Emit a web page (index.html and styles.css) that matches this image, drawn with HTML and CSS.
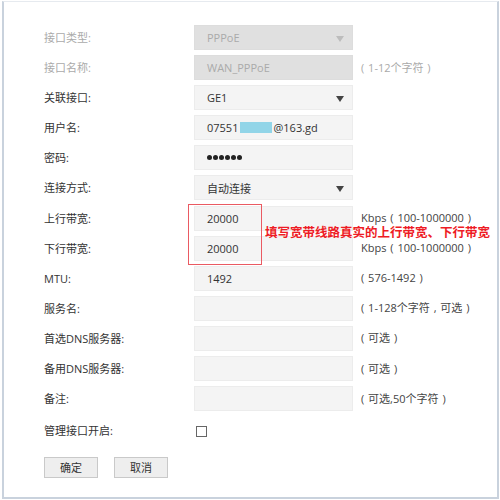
FILE: index.html
```html
<!DOCTYPE html>
<html>
<head>
<meta charset="utf-8">
<link rel="stylesheet" href="styles.css">
</head>
<body>
<div class="frame">
  <div class="form">
    <div class="row disabled">
      <div class="label">接口类型:</div>
      <div class="field select"><span>PPPoE</span><i class="arrow"></i></div>
    </div>
    <div class="row disabled">
      <div class="label">接口名称:</div>
      <div class="field"><span>WAN_PPPoE</span></div>
      <div class="hint">( 1-12个字符 )</div>
    </div>
    <div class="row">
      <div class="label">关联接口:</div>
      <div class="field select"><span>GE1</span><i class="arrow"></i></div>
    </div>
    <div class="row">
      <div class="label">用户名:</div>
      <div class="field"><span>07551</span><span class="mask"></span><span>@163.gd</span></div>
    </div>
    <div class="row">
      <div class="label">密码:</div>
      <div class="field"><span class="dots"><b></b><b></b><b></b><b></b><b></b><b></b></span></div>
    </div>
    <div class="row">
      <div class="label">连接方式:</div>
      <div class="field select"><span>自动连接</span><i class="arrow"></i></div>
    </div>
    <div class="row">
      <div class="label">上行带宽:</div>
      <div class="field"><span>20000</span></div>
      <div class="hint">Kbps ( 100-1000000 )</div>
    </div>
    <div class="row">
      <div class="label">下行带宽:</div>
      <div class="field"><span>20000</span></div>
      <div class="hint">Kbps ( 100-1000000 )</div>
    </div>
    <div class="row">
      <div class="label">MTU:</div>
      <div class="field"><span>1492</span></div>
      <div class="hint">( 576-1492 )</div>
    </div>
    <div class="row">
      <div class="label">服务名:</div>
      <div class="field"></div>
      <div class="hint">( 1-128个字符 , 可选 )</div>
    </div>
    <div class="row">
      <div class="label">首选DNS服务器:</div>
      <div class="field"></div>
      <div class="hint">( 可选 )</div>
    </div>
    <div class="row">
      <div class="label">备用DNS服务器:</div>
      <div class="field"></div>
      <div class="hint">( 可选 )</div>
    </div>
    <div class="row">
      <div class="label">备注:</div>
      <div class="field"></div>
      <div class="hint">( 可选,50个字符 )</div>
    </div>
    <div class="row check-row">
      <div class="label">管理接口开启:</div>
      <div class="checkbox"></div>
    </div>
    <div class="buttons">
      <div class="btn">确定</div>
      <div class="btn">取消</div>
    </div>
  </div>
  <div class="note-box"></div>
  <div class="note-text">填写宽带线路真实的上行带宽、下行带宽</div>
</div>
</body>
</html>
```
FILE: styles.css
```css
html, body {
  margin: 0;
  padding: 0;
  background: #ffffff;
}
body {
  font-family: "Open Sans", "Noto Sans CJK SC", sans-serif;
  font-size: 11px;
  color: #333333;
}
.frame {
  position: relative;
  margin: 1px 0 0 2px;
  width: 493px;
  height: 495px;
  border: 2px solid #c9d2dd;
  border-top: 1px solid #e6eaef;
}
.form {
  padding: 23px 0 0 40px;
}
.row {
  display: flex;
  align-items: flex-start;
  height: 30.1px;
}
.label {
  width: 150px;
  height: 25px;
  line-height: 25px;
  white-space: nowrap;
}
.field {
  box-sizing: border-box;
  width: 159px;
  height: 25px;
  background: #f4f4f4;
  border: 1px solid #ececec;
  padding-left: 12px;
  display: flex;
  align-items: center;
  position: relative;
  white-space: nowrap;
  color: #333333;
}
.disabled .label,
.disabled .field,
.disabled .hint {
  color: #aaaaaa;
}
.disabled .field {
  background: #e0e0e0;
  border-color: #dddddd;
}
.arrow {
  position: absolute;
  right: 8px;
  top: 10px;
  width: 0;
  height: 0;
  border-left: 4.5px solid transparent;
  border-right: 4.5px solid transparent;
  border-top: 6px solid #444444;
}
.disabled .arrow {
  border-top-color: #bdbdbd;
}
.mask {
  display: inline-block;
  width: 32px;
  height: 11px;
  background: #92d5e8;
  margin: 0 1px 0 2px;
}
.dots {
  display: flex;
  gap: 1px;
}
.dots b {
  display: block;
  width: 5px;
  height: 5px;
  border-radius: 50%;
  background: #222222;
}
.hint {
  margin-left: 8px;
  padding-top: 5.5px;
  line-height: 14px;
  white-space: pre;
  word-spacing: 1px;
  color: #444444;
}
.check-row {
  align-items: center;
  height: 30px;
}
.check-row .label {
  height: 30px;
  line-height: 30px;
}
.checkbox {
  box-sizing: border-box;
  width: 11px;
  height: 11px;
  border: 1px solid #666666;
  background: #ffffff;
  margin-top: 1px;
  margin-left: 2px;
}
.buttons {
  display: flex;
  gap: 16px;
  margin-top: 11px;
}
.btn {
  box-sizing: border-box;
  width: 54px;
  height: 21px;
  line-height: 19px;
  text-align: center;
  background: #eeeeee;
  border: 1px solid #c9c9c9;
  color: #333333;
}
.note-box {
  position: absolute;
  left: 184px;
  top: 202px;
  width: 72px;
  height: 59px;
  border: 1px solid #ea5a62;
}
.note-text {
  position: absolute;
  left: 261px;
  top: 224px;
  line-height: 14px;
  font-size: 12.5px;
  font-weight: bold;
  color: #ee1c25;
  white-space: nowrap;
}
```
